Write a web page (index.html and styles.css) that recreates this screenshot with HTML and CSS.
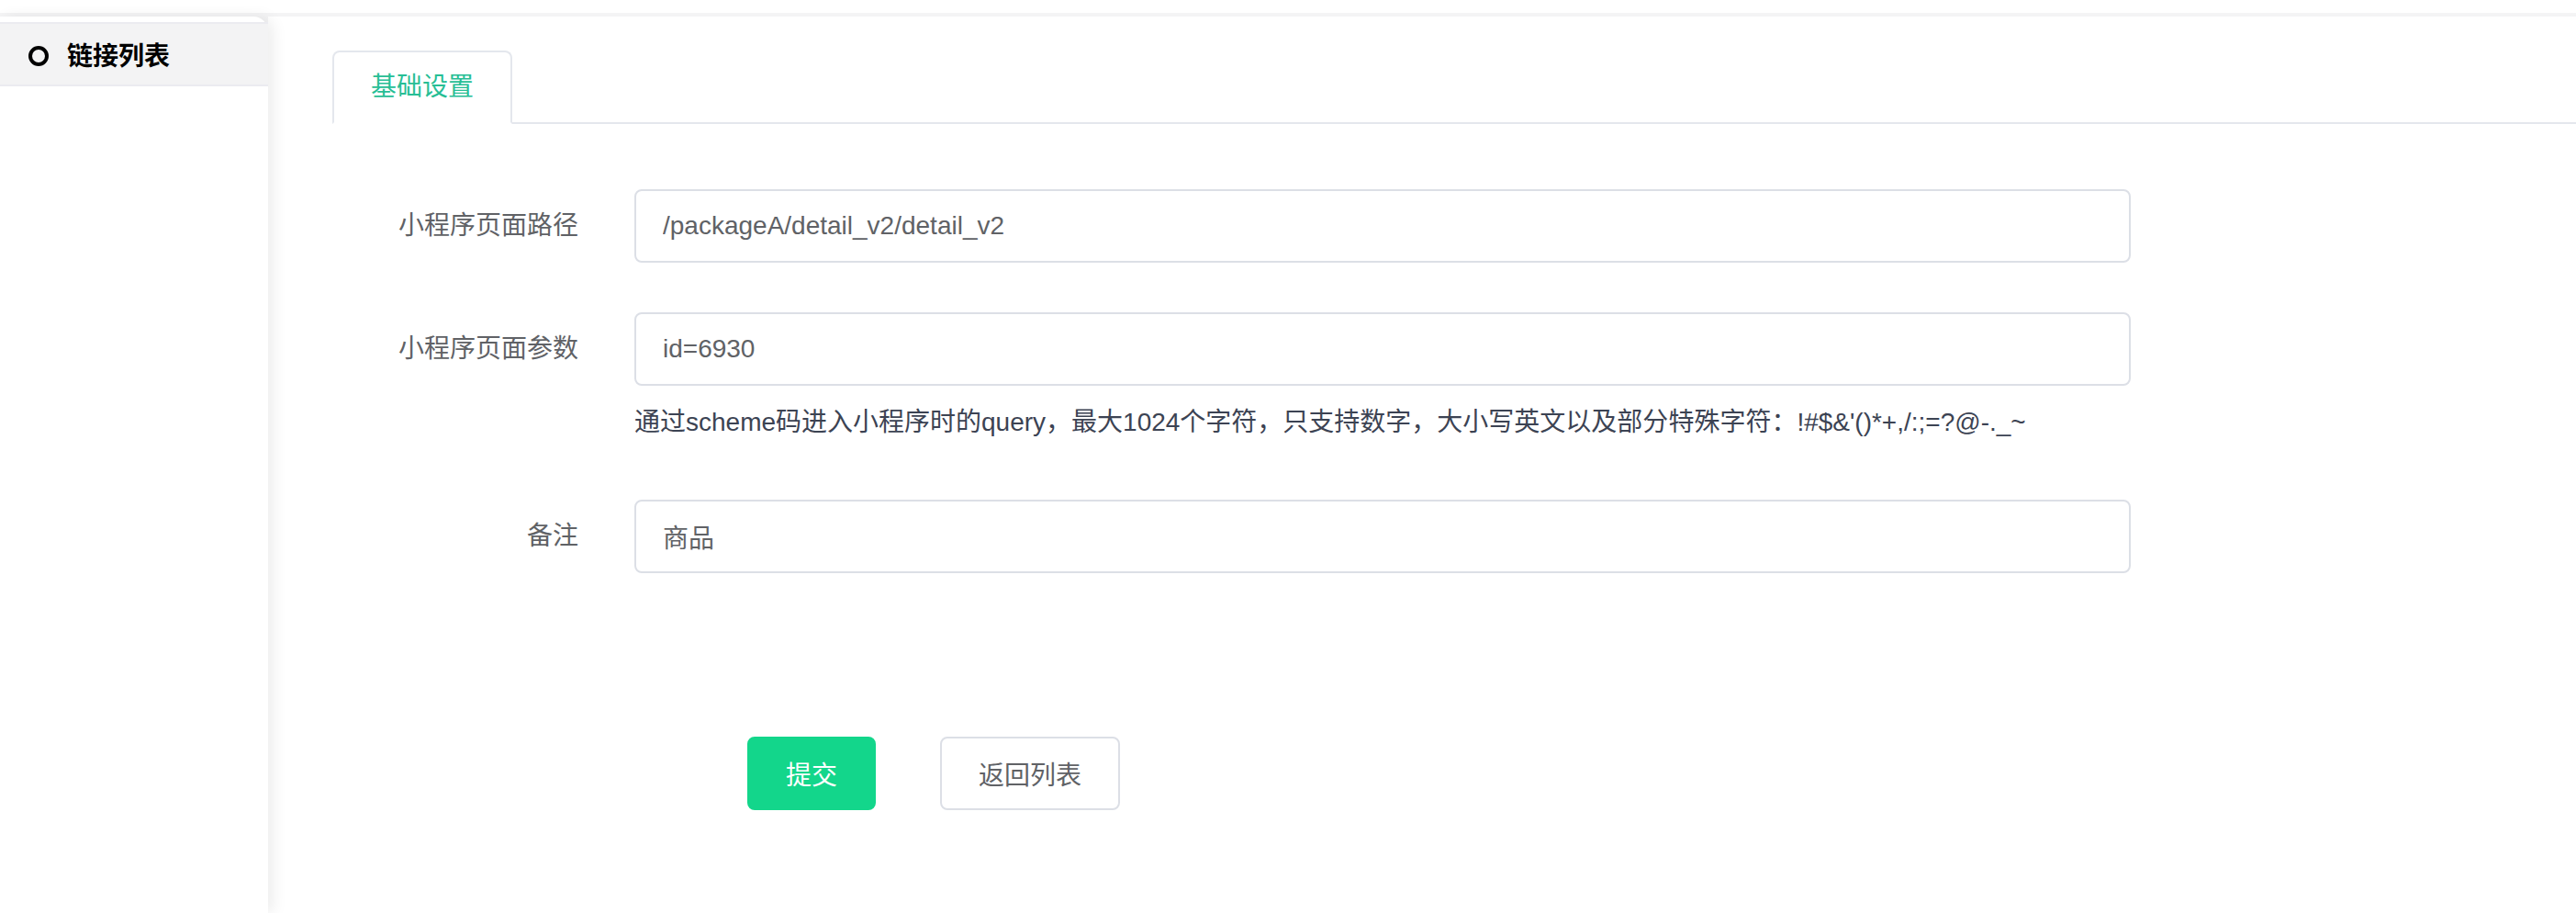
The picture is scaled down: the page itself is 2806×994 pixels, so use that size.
FILE: index.html
```html
<!DOCTYPE html>
<html>
<head>
    <meta charset="utf-8">
    <title>链接列表</title>
    <link rel="stylesheet" href="styles.css">
</head>
<body>
    <div class="top"></div>
    <div class="layout">
        <div class="sidebar">
            <div class="menu-item">
                <span class="dot"></span>
                <span class="menu-text">链接列表</span>
            </div>
        </div>
        <div class="main">
            <div class="tabs">
                <div class="tab active">基础设置</div>
            </div>
            <form class="form">
                <div class="form-item">
                    <label class="label">小程序页面路径</label>
                    <div class="content">
                        <input class="input" type="text" value="/packageA/detail_v2/detail_v2">
                    </div>
                </div>
                <div class="form-item">
                    <label class="label">小程序页面参数</label>
                    <div class="content">
                        <input class="input" type="text" value="id=6930">
                        <div class="tip">通过scheme码进入小程序时的query，最大1024个字符，只支持数字，大小写英文以及部分特殊字符：!#$&amp;'()*+,/:;=?@-._~</div>
                    </div>
                </div>
                <div class="form-item">
                    <label class="label">备注</label>
                    <div class="content">
                        <input class="input" type="text" value="商品">
                    </div>
                </div>
                <div class="btns">
                    <button type="button" class="btn btn-primary">提交</button>
                    <button type="button" class="btn">返回列表</button>
                </div>
            </form>
        </div>
    </div>
</body>
</html>
```
FILE: styles.css
```css
*{
    padding: 0;
    margin: 0;
    box-sizing: border-box;
}
html,body{
    height: 994px;
    overflow: hidden;
    background: #fff;
    font-family: "Liberation Sans", "Noto Sans CJK SC", sans-serif;
}
.top{
    height: 14px;
    background: #fff;
}
.layout{
    display: flex;
    height: 980px;
    padding-top: 4px;
    background: #f4f4f5;
}
.sidebar{
    position: relative;
    z-index: 1;
    width: 292px;
    background: #fff;
    border-top-right-radius: 16px;
    box-shadow: 6px 0 16px rgba(0,0,0,0.07);
}
.menu-item{
    display: flex;
    align-items: center;
    height: 70px;
    margin-top: 6px;
    padding-left: 31px;
    background: #f3f3f4;
    border-top: 2px solid #ebebf0;
    border-bottom: 2px solid #ebebf0;
}
.dot{
    width: 22px;
    height: 22px;
    border: 4px solid #000;
    border-radius: 50%;
    margin-top: 3px;
    margin-right: 20px;
}
.menu-text{
    font-size: 28px;
    font-weight: bold;
    color: #000;
}
.main{
    flex: 1;
    background: #fff;
    padding: 37px 0 0 70px;
}
.tabs{
    display: flex;
    border-bottom: 2px solid #e4e7ed;
}
.tab{
    height: 80px;
    line-height: 76px;
    padding: 0 40px;
    font-size: 28px;
    color: #606266;
    border: 2px solid #e4e7ed;
    border-radius: 8px 8px 0 0;
    margin-bottom: -2px;
}
.tab.active{
    color: #27be95;
    border-bottom-color: #fff;
}
.form{
    margin-top: 71px;
}
.form-item{
    display: flex;
    margin-bottom: 54px;
}
.label{
    width: 329px;
    padding-right: 61px;
    text-align: right;
    font-size: 28px;
    line-height: 80px;
    color: #606266;
}
.content{
    width: 1630px;
}
.input{
    display: block;
    width: 100%;
    height: 80px;
    padding: 0 29px;
    font-family: "Liberation Sans", "Noto Sans CJK SC", sans-serif;
    font-size: 28px;
    color: #606266;
    border: 2px solid #dcdfe6;
    border-radius: 8px;
    background: #fff;
    outline: none;
}
.tip{
    margin-top: 12px;
    margin-bottom: 2px;
    font-size: 28px;
    line-height: 56px;
    color: #3c4353;
}
.btns{
    display: flex;
    gap: 70px;
    padding-left: 452px;
    margin-top: 178px;
}
.btn{
    height: 80px;
    padding: 0 40px;
    font-family: "Liberation Sans", "Noto Sans CJK SC", sans-serif;
    font-size: 28px;
    color: #606266;
    background: #fff;
    border: 2px solid #dcdfe6;
    border-radius: 8px;
}
.btn-primary{
    color: #fff;
    background: #13d68b;
    border-color: #13d68b;
}
```
